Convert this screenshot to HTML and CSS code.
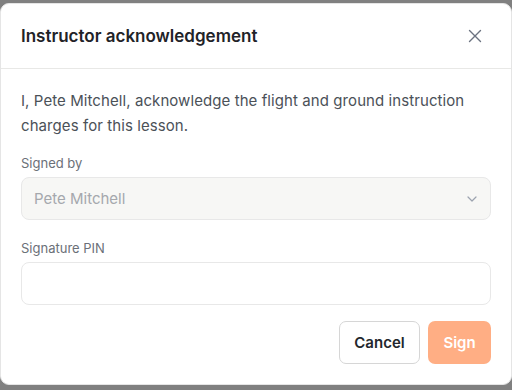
FILE: index.html
```html
<!DOCTYPE html>
<html>
<head>
<meta charset="utf-8">
<link rel="stylesheet" href="styles.css">
</head>
<body>
<div class="dialog">
  <div class="header">
    <h2 class="title">Instructor acknowledgement</h2>
    <button class="close" aria-label="Close">
      <svg width="14" height="14" viewBox="0 0 14 14"><path d="M1.5 1.5 L12.5 12.5 M12.5 1.5 L1.5 12.5" stroke="#6b7280" stroke-width="1.4" stroke-linecap="round" fill="none"/></svg>
    </button>
  </div>
  <div class="body">
    <p class="intro">I, Pete Mitchell, acknowledge the flight and ground instruction charges for this lesson.</p>
    <div class="field">
      <label class="label">Signed by</label>
      <div class="select">
        <span>Pete Mitchell</span>
        <svg width="10" height="6" viewBox="0 0 10 6"><path d="M1 1 L5 5 L9 1" stroke="#9ca3af" stroke-width="1.2" fill="none" stroke-linecap="round" stroke-linejoin="round"/></svg>
      </div>
    </div>
    <div class="field">
      <label class="label">Signature PIN</label>
      <div class="input"></div>
    </div>
    <div class="actions">
      <button class="btn cancel">Cancel</button>
      <button class="btn sign">Sign</button>
    </div>
  </div>
</div>
</body>
</html>
```
FILE: styles.css
```css
* { box-sizing: border-box; }
html, body { margin: 0; padding: 0; }
body {
  background: #808080;
  font-family: Inter, "Noto Sans", sans-serif;
  width: 512px;
  height: 390px;
  overflow: hidden;
  padding-top: 3px;
}
.dialog {
  width: 512px;
  height: 382px;
  background: #fff;
  border-radius: 9px;
  border: 1px solid #e5e5e5;
  display: flex;
  flex-direction: column;
}
.header {
  height: 65px;
  display: flex;
  align-items: center;
  justify-content: space-between;
  padding: 0 20px 0 20px;
  border-bottom: 1px solid #e8e8e6;
}
.title {
  margin: 0;
  font-size: 17px;
  font-weight: 600;
  color: #1f2328;
}
.close {
  background: none;
  border: 0;
  padding: 0;
  width: 14px;
  height: 14px;
  margin-right: 9px;
  display: flex;
}
.body {
  padding: 19px 20px 20px 20px;
  display: flex;
  flex-direction: column;
}
.intro {
  margin: 0 0 16px 0;
  font-size: 15px;
  line-height: 25px;
  letter-spacing: 0.08px;
  color: #4b5158;
}
.field {
  display: flex;
  flex-direction: column;
  gap: 4px;
  margin-bottom: 19px;
}
.label {
  font-size: 13px;
  line-height: 19px;
  color: #6b7078;
}
.select, .input {
  height: 43px;
  border: 1px solid #e8e8e8;
  border-radius: 8px;
}
.select {
  background: #f7f7f5;
  display: flex;
  align-items: center;
  justify-content: space-between;
  padding: 0 13px 0 12px;
  font-size: 15px;
  color: #a5a8ad;
}
.input { background: #fff; }
.actions {
  display: flex;
  justify-content: flex-end;
  gap: 8px;
  margin-top: -3px;
}
.btn {
  height: 43px;
  border-radius: 7px;
  font-family: inherit;
  font-size: 15px;
  font-weight: 600;
}
.cancel {
  width: 81px;
  background: #fff;
  border: 1px solid #d6d6d6;
  color: #23272d;
}
.sign {
  width: 63px;
  background: #ffae84;
  border: 0;
  color: #fff;
}
```
